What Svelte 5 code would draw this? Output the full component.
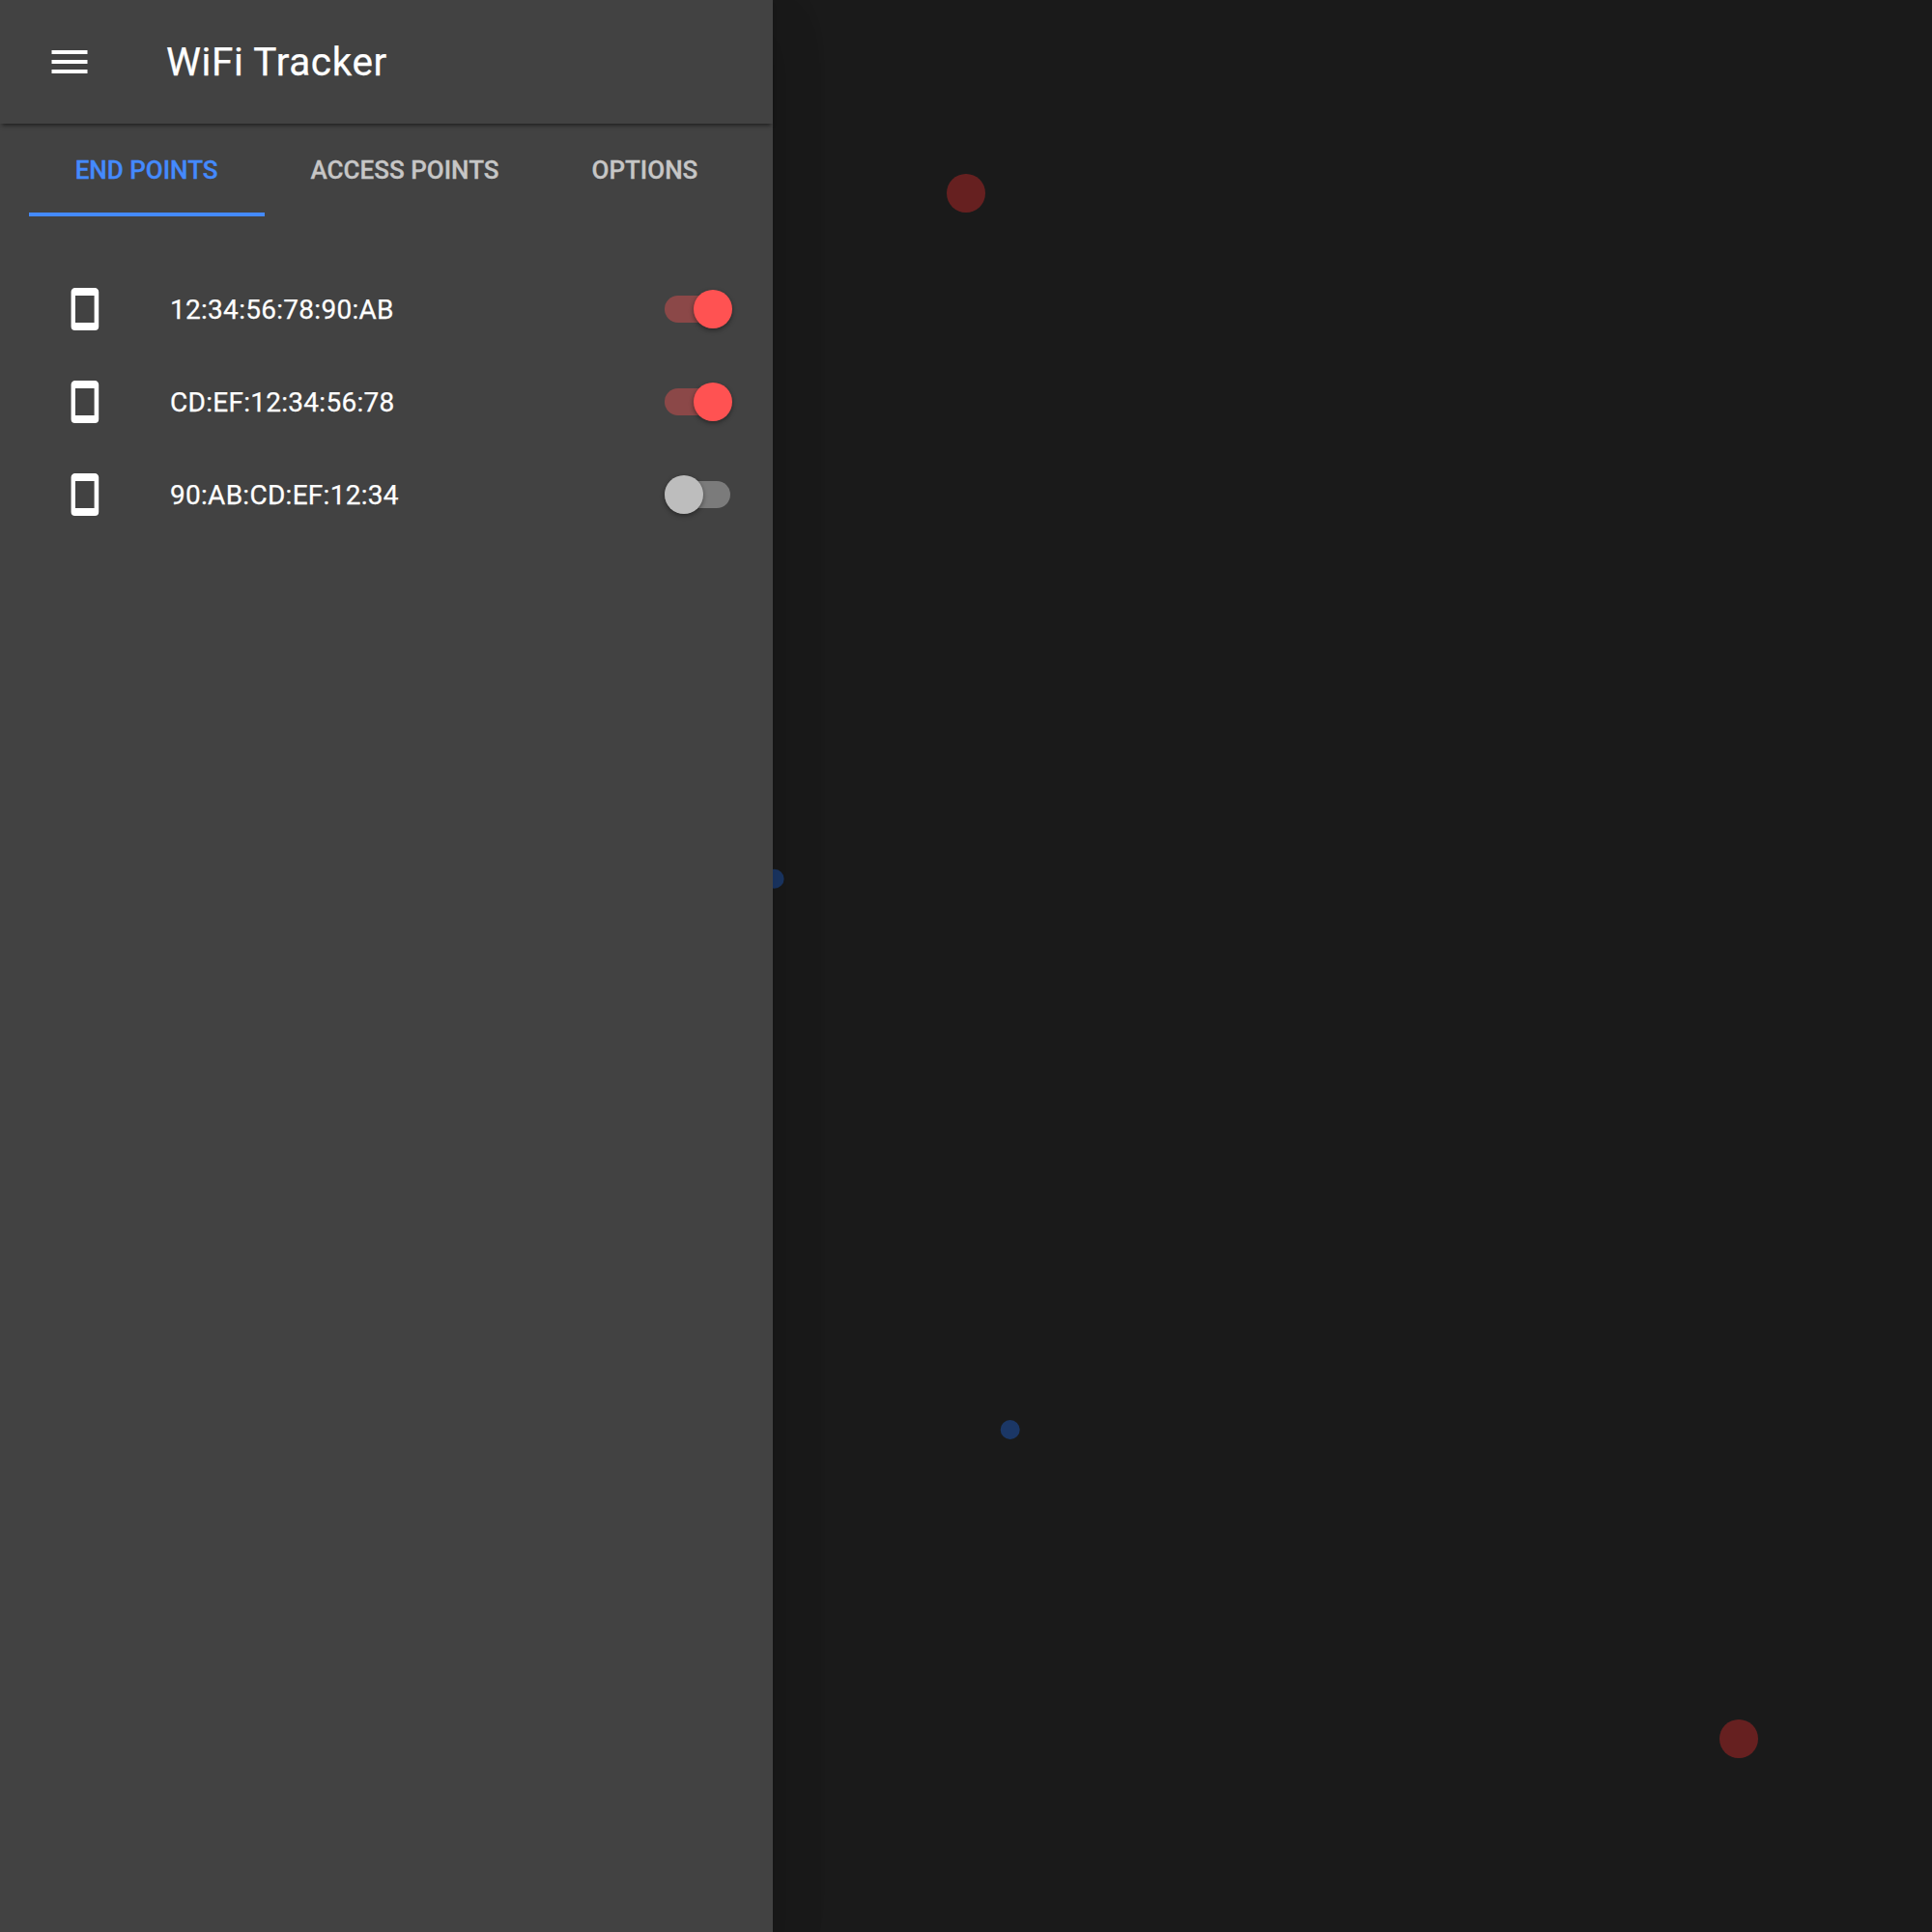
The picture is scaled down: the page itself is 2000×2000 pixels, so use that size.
<script>
  const tabs = ['End Points', 'Access Points', 'Options'];
  let active = $state(0);
  let devices = $state([
    { mac: '12:34:56:78:90:AB', on: true },
    { mac: 'CD:EF:12:34:56:78', on: true },
    { mac: '90:AB:CD:EF:12:34', on: false }
  ]);
  const markers = [
    { kind: 'endpoint', x: 1000, y: 200, r: 20 },
    { kind: 'endpoint', x: 1800, y: 1800, r: 20 },
    { kind: 'access', x: 801.6, y: 909.8, r: 10 },
    { kind: 'access', x: 1045.7, y: 1480, r: 10 }
  ];
</script>

<div class="app">
  <svg class="map" viewBox="0 0 2000 2000">
    {#each markers as m}
      <circle class={m.kind} cx={m.x} cy={m.y} r={m.r} />
    {/each}
  </svg>
  <div class="scrim"></div>

  <aside class="drawer">
    <header class="toolbar">
      <button class="menu" aria-label="Menu">
        <svg viewBox="0 0 24 24"><path d="M2.75 6h18.5v2H2.75zM2.75 11h18.5v2H2.75zM2.75 16h18.5v2H2.75z" /></svg>
      </button>
      <h1>WiFi Tracker</h1>
    </header>

    <nav class="tabs">
      {#each tabs as tab, i}
        <button class="tab" class:active={active === i} onclick={() => (active = i)}>{tab}</button>
      {/each}
    </nav>

    <ul class="list">
      {#each devices as device}
        <li>
          <svg class="phone" viewBox="0 0 24 24">
            <path d="M16.8 19H7V5h9.8m.3-4H6.8c-1.11 0-2 .89-2 2v18a2 2 0 0 0 2 2h10.3a2 2 0 0 0 2-2V3c0-1.11-.9-2-2-2z" />
          </svg>
          <span class="mac">{device.mac}</span>
          <button
            class="switch"
            class:on={device.on}
            role="switch"
            aria-checked={device.on}
            aria-label={device.mac}
            onclick={() => (device.on = !device.on)}
          ><span class="thumb"></span></button>
        </li>
      {/each}
    </ul>
  </aside>
</div>

<style>
  :global(body) {
    margin: 0;
    background: #424242;
  }
  .app {
    position: relative;
    width: 2000px;
    height: 2000px;
    overflow: hidden;
    background: #424242;
    color: #fff;
    font-family: Roboto, sans-serif;
  }
  button {
    border: 0;
    padding: 0;
    background: none;
    color: inherit;
    font: inherit;
  }
  svg {
    display: block;
    fill: currentColor;
  }
  .map,
  .scrim {
    position: absolute;
    inset: 0;
  }
  .scrim {
    background: rgba(0, 0, 0, 0.6);
  }
  .endpoint {
    fill: #ff5252;
  }
  .access {
    fill: #448aff;
  }
  .drawer {
    position: relative;
    width: 800px;
    height: 100%;
    background: #424242;
    box-shadow:
      0 32px 48px 4px rgba(0, 0, 0, 0.12),
      0 12px 60px 2px rgba(0, 0, 0, 0.08);
  }
  .toolbar {
    display: flex;
    align-items: center;
    height: 128px;
    padding-left: 48px;
    box-sizing: border-box;
    box-shadow: 0 4px 4px -2px rgba(0, 0, 0, 0.5);
  }
  .menu svg,
  .phone {
    width: 48px;
    height: 48px;
  }
  h1 {
    margin: 0 0 0 76px;
    font-size: 40.5px;
    font-weight: 400;
    letter-spacing: 0.62px;
    line-height: 52px;
    -webkit-text-stroke: 0.25px currentColor;
  }
  .tabs {
    display: flex;
    justify-content: center;
    height: 96px;
  }
  .tab {
    padding: 4px 48px 0;
    border-bottom: 4px solid transparent;
    color: #c6c6c6;
    font-size: 26px;
    font-weight: 500;
    text-transform: uppercase;
    -webkit-text-stroke: 0.3px currentColor;
  }
  .tab.active {
    border-color: #448aff;
    color: #448aff;
  }
  .list {
    margin: 0;
    padding: 48px 44px 0 64px;
    list-style: none;
  }
  li {
    display: flex;
    align-items: center;
    height: 96px;
  }
  .mac {
    flex: 1;
    margin-left: 64px;
    padding-top: 2px;
    font-size: 28px;
    font-weight: 400;
    letter-spacing: 0.28px;
    line-height: 40px;
    -webkit-text-stroke: 0.25px currentColor;
  }
  .switch {
    display: flex;
    align-items: center;
    width: 68px;
    height: 28px;
    border-radius: 14px;
    background: #7b7b7b;
  }
  .switch.on {
    background: #8b4848;
  }
  .thumb {
    flex: none;
    width: 40px;
    height: 40px;
    border-radius: 50%;
    background: #bdbdbd;
    box-shadow: 0 2px 5px rgba(0, 0, 0, 0.4);
  }
  .on .thumb {
    margin-left: 30px;
    background: #ff5252;
  }
</style>
